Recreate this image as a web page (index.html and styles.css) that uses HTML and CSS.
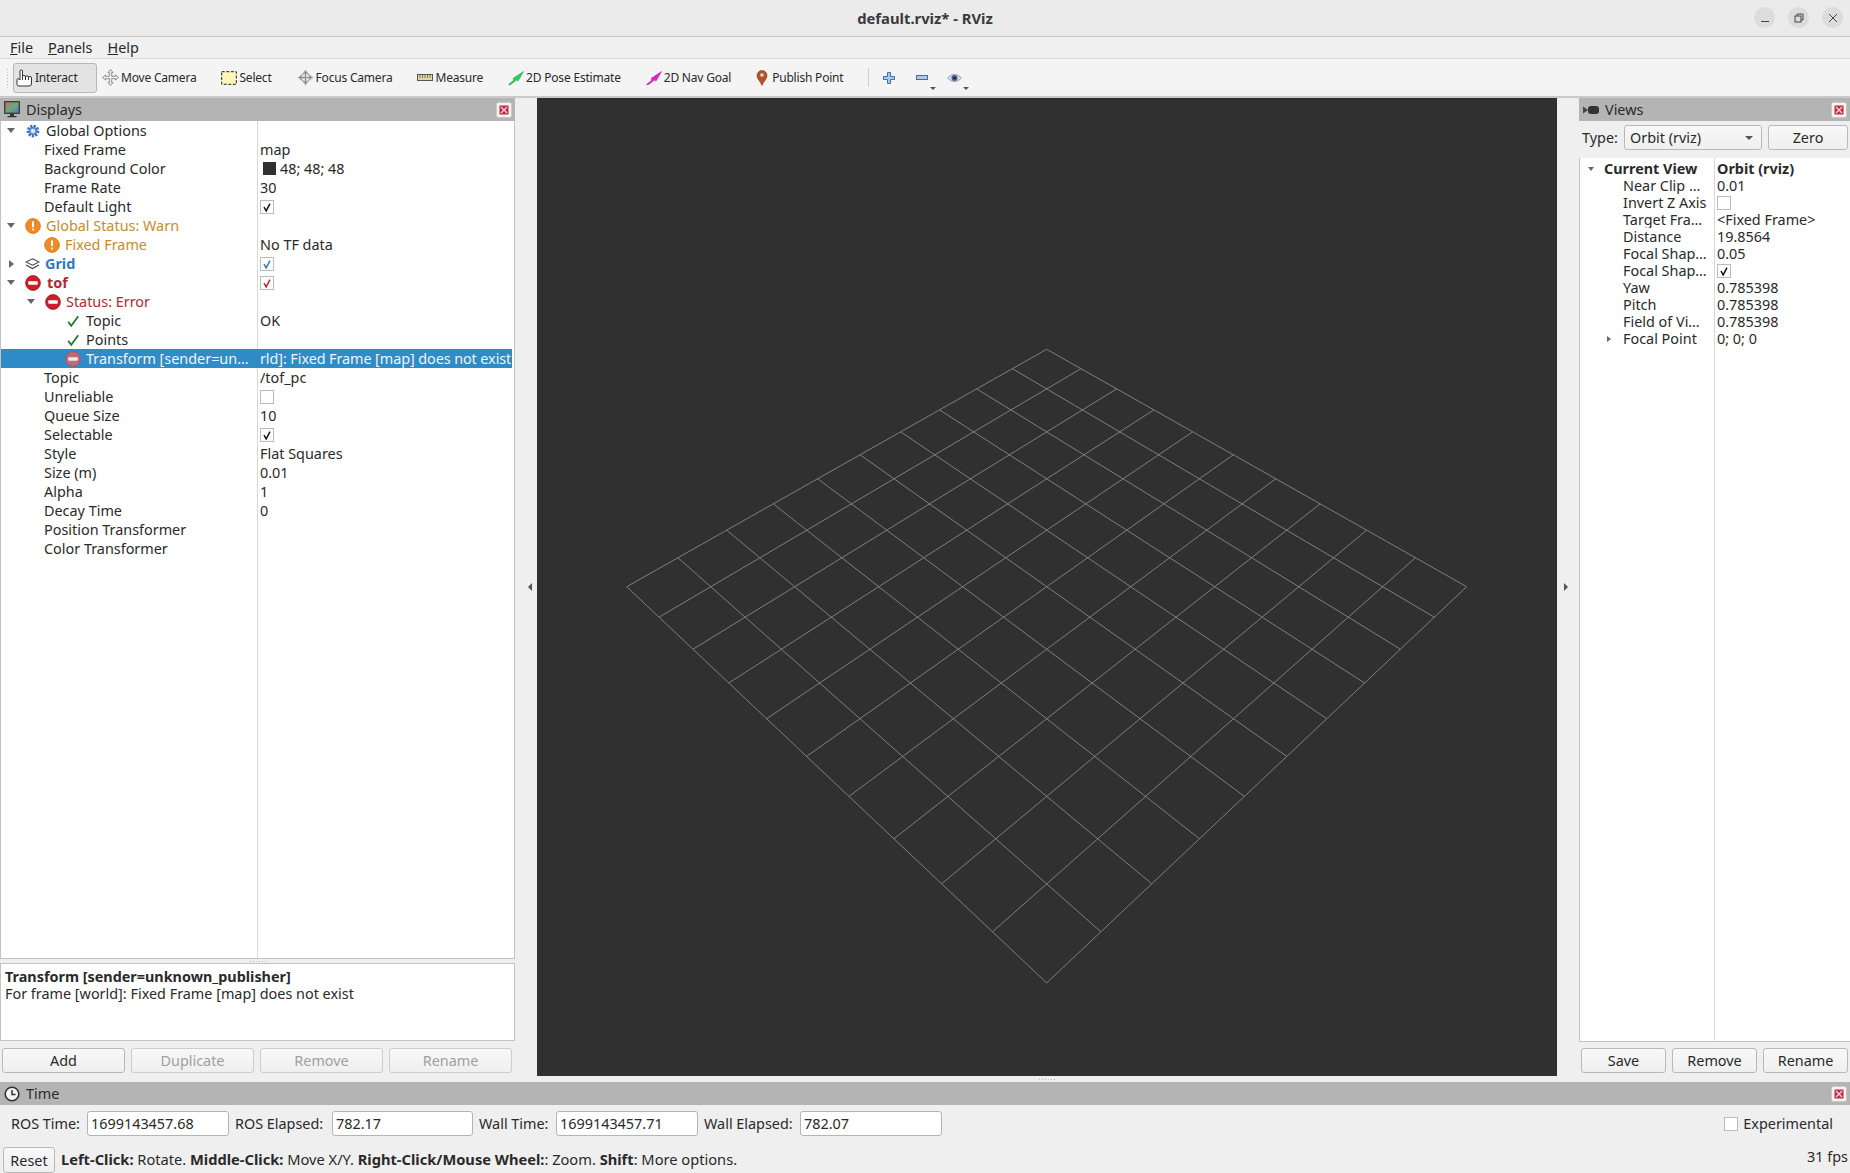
FILE: index.html
```html
<!DOCTYPE html>
<html lang="en">
<head>
<meta charset="UTF-8">
<title>default.rviz* - RViz</title>
<link rel="stylesheet" href="styles.css">
</head>
<body>

<!-- shared icons -->
<svg class="sprite" width="0" height="0">
  <symbol id="err" viewBox="0 0 16 16"><circle cx="8" cy="8" r="7.4" fill="#cc1f2b" stroke="#a5141f" stroke-width=".8"/><rect x="3.2" y="6.2" width="9.6" height="3.6" rx="1" fill="#fff"/></symbol>
  <symbol id="err-sel" viewBox="0 0 16 16"><circle cx="8" cy="8" r="7.4" fill="#c06a78" stroke="#a8505e" stroke-width=".8"/><rect x="3.2" y="6.2" width="9.6" height="3.6" rx="1" fill="#f3e6ea"/></symbol>
  <symbol id="warn" viewBox="0 0 16 16"><circle cx="8" cy="8" r="7.4" fill="#f08a24" stroke="#d9741a" stroke-width=".8"/><rect x="7" y="3.2" width="2" height="6" rx=".8" fill="#fff"/><rect x="7" y="10.6" width="2" height="2" rx=".8" fill="#fff"/></symbol>
  <symbol id="ok" viewBox="0 0 16 16"><path d="M2.5 9 L6 13.5 L14 2.5" fill="none" stroke="#1f7a2e" stroke-width="2"/></symbol>
  <symbol id="tick" viewBox="0 0 14 14"><path d="M3.5 7 L6 11.5 L10.5 3" fill="none" stroke="currentColor" stroke-width="1.7"/></symbol>
  <symbol id="close" viewBox="0 0 16 16"><rect x=".5" y=".5" width="15" height="15" rx="2" fill="#f4f4f4" stroke="#c8c8c8"/><rect x="3.5" y="3.5" width="9" height="9" fill="#c9283e"/><path d="M5 5 L11 11 M11 5 L5 11" stroke="#f6dfe2" stroke-width="1.3"/></symbol>
</svg>

<div class="titlebar">
  <span class="title-text">default.rviz* - RViz</span>
  <div class="win-btns">
    <span class="win-btn"><svg width="10" height="10" viewBox="0 0 10 10"><path d="M1 8.5 H9" stroke="#444" stroke-width="1"/></svg></span>
    <span class="win-btn"><svg width="10" height="10" viewBox="0 0 10 10"><rect x="1" y="3" width="6" height="6" fill="none" stroke="#444"/><path d="M3 3 V1 H9 V7 H7" fill="none" stroke="#444"/></svg></span>
    <span class="win-btn"><svg width="10" height="10" viewBox="0 0 10 10"><path d="M1 1 L9 9 M9 1 L1 9" stroke="#444" stroke-width="1"/></svg></span>
  </div>
</div>

<div class="menubar">
  <span><u>F</u>ile</span>
  <span><u>P</u>anels</span>
  <span><u>H</u>elp</span>
</div>

<div class="toolbar">
  <span class="grip"></span>
  <div class="tool tool-on">
    <svg width="17" height="18" viewBox="0 0 17 18"><path d="M1 10.5 V15.5 Q1 17 3 17 H13 Q15.5 17 15.5 15 V9 Q15.5 7.5 14 7.5 Q12.5 7.5 12.5 8.5 Q12.5 6.8 11 6.8 Q9.5 6.8 9.5 8 Q9.5 6.5 8 6.5 Q6.5 6.5 6.5 7.5 V2 Q6.5 1 5.3 1 Q4 1 4 2 V11 L3 10 Q1 9.3 1 10.5 Z M9.5 8 V11 M12.5 8.5 V11 M6.5 7.5 V11" fill="#fff" stroke="#333" stroke-width="1"/></svg>
    <span>Interact</span>
  </div>
  <div class="tool">
    <svg width="17" height="17" viewBox="0 0 17 17"><path d="M8.5 .5 L11 3.5 H9.7 V7.3 H13.5 V6 L16.5 8.5 L13.5 11 V9.7 H9.7 V13.5 H11 L8.5 16.5 L6 13.5 H7.3 V9.7 H3.5 V11 L.5 8.5 L3.5 6 V7.3 H7.3 V3.5 H6 Z" fill="#eee" stroke="#777" stroke-width=".8"/></svg>
    <span>Move Camera</span>
  </div>
  <div class="tool">
    <svg width="16" height="14" viewBox="0 0 16 14"><rect x=".7" y=".7" width="14.6" height="12.6" fill="#fdf6b8" stroke="#222" stroke-width="1" stroke-dasharray="3 1.6"/></svg>
    <span>Select</span>
  </div>
  <div class="tool">
    <svg width="17" height="17" viewBox="0 0 17 17"><path d="M8.5 .5 L11 4 H6 Z M8.5 16.5 L11 13 H6 Z M.5 8.5 L4 6 V11 Z M16.5 8.5 L13 6 V11 Z" fill="#aaa"/><circle cx="8.5" cy="8.5" r="4.6" fill="#ddd" stroke="#888"/><path d="M8.5 3 V14 M3 8.5 H14" stroke="#888"/></svg>
    <span>Focus Camera</span>
  </div>
  <div class="tool">
    <svg width="16" height="8" viewBox="0 0 16 8"><rect x=".5" y=".5" width="15" height="6" fill="#e3d9a0" stroke="#555"/><path d="M3 1 V4 M5.5 1 V4 M8 1 V4 M10.5 1 V4 M13 1 V4" stroke="#777"/></svg>
    <span>Measure</span>
  </div>
  <div class="tool">
    <svg width="16" height="14" viewBox="0 0 16 14"><path d="M.5 13.5 L6 9 L5 7.5 L15.5 .5 L10 10 L8.5 9 L2 14 Z" fill="#24d45a" stroke="#149040" stroke-width=".5"/></svg>
    <span>2D Pose Estimate</span>
  </div>
  <div class="tool">
    <svg width="16" height="14" viewBox="0 0 16 14"><path d="M.5 13.5 L6 9 L5 7.5 L15.5 .5 L10 10 L8.5 9 L2 14 Z" fill="#e622c8" stroke="#a61090" stroke-width=".5"/></svg>
    <span>2D Nav Goal</span>
  </div>
  <div class="tool tool-pin">
    <svg width="12" height="16" viewBox="0 0 12 16"><path d="M6 15.5 C4.5 11.5 1 9 1 5.5 A5 5 0 0 1 11 5.5 C11 9 7.5 11.5 6 15.5 Z" fill="#b5502a" stroke="#8a3a1c" stroke-width=".6"/><circle cx="6" cy="5" r="1.8" fill="#f2d9c8"/></svg>
    <span>Publish Point</span>
  </div>
  <span class="tool-sep"></span>
  <svg class="tool-ico ico-plus" width="12" height="12" viewBox="0 0 12 12"><path d="M4.5 .5 H7.5 V4.5 H11.5 V7.5 H7.5 V11.5 H4.5 V7.5 H.5 V4.5 H4.5 Z" fill="#a8c8ec" stroke="#3a70b0"/></svg>
  <svg class="tool-ico ico-minus" width="12" height="5" viewBox="0 0 12 5"><rect x=".5" y=".5" width="11" height="4" fill="#a8c8ec" stroke="#3a70b0"/></svg>
  <span class="drop-caret caret-minus"></span>
  <svg class="tool-ico ico-eye" width="15" height="10" viewBox="0 0 15 10"><path d="M.5 5 Q7.5 -2.5 14.5 5 Q7.5 12.5 .5 5 Z" fill="#d8dde8" stroke="#8a8f9a" stroke-width=".7"/><circle cx="7.5" cy="5" r="3" fill="#4a5d90"/><circle cx="7.5" cy="5" r="1.2" fill="#1c2230"/></svg>
  <span class="drop-caret caret-eye"></span>
</div>

<div class="main">
  <div class="dock dock-left">
    <div class="dock-title">
      <svg width="16" height="17" viewBox="0 0 16 17"><defs><linearGradient id="screen" x1="0" y1="0" x2="1" y2="1"><stop offset="0" stop-color="#c06a80"/><stop offset=".5" stop-color="#6ca878"/><stop offset="1" stop-color="#5a78c0"/></linearGradient></defs><rect x=".7" y=".7" width="14.6" height="11.6" fill="url(#screen)" stroke="#333" stroke-width="1.2"/><path d="M6 13 H10 V15 H12.5 V16.3 H3.5 V15 H6 Z" fill="#333"/></svg>
      <span>Displays</span>
      <svg class="dock-close" width="16" height="16"><use href="#close"/></svg>
    </div>

    <div class="tree tree-displays">
      <div class="row"><div class="name"><span class="caret down"></span><svg class="ico ico-gear" width="14" height="14" viewBox="0 0 14 14"><circle cx="7" cy="7" r="4.6" fill="#7fa6e0" stroke="#3f6fc0" stroke-width="3.6" stroke-dasharray="1.9 1.2"/><circle cx="7" cy="7" r="2" fill="#e4edfa"/></svg><span class="lbl">Global Options</span></div><div class="val"></div></div>
      <div class="row"><div class="name d1">Fixed Frame</div><div class="val">map</div></div>
      <div class="row"><div class="name d1">Background Color</div><div class="val"><span class="swatch"></span>48; 48; 48</div></div>
      <div class="row"><div class="name d1">Frame Rate</div><div class="val">30</div></div>
      <div class="row"><div class="name d1">Default Light</div><div class="val"><span class="check"><svg width="14" height="14"><use href="#tick"/></svg></span></div></div>
      <div class="row warn"><div class="name"><span class="caret down"></span><svg class="ico" width="16" height="16"><use href="#warn"/></svg><span class="lbl">Global Status: Warn</span></div><div class="val"></div></div>
      <div class="row warn"><div class="name d1i"><svg class="ico" width="16" height="16"><use href="#warn"/></svg><span class="lbl">Fixed Frame</span></div><div class="val val-plain">No TF data</div></div>
      <div class="row grid-row"><div class="name"><span class="caret right"></span><svg class="ico" width="15" height="12" viewBox="0 0 15 12"><path d="M7.5 .8 L14 4 L7.5 7.2 L1 4 Z M1 7 L7.5 10.6 L14 7" fill="none" stroke="#444" stroke-width="1.1"/></svg><span class="lbl">Grid</span></div><div class="val"><span class="check check-blue"><svg width="14" height="14"><use href="#tick"/></svg></span></div></div>
      <div class="row err"><div class="name"><span class="caret down"></span><svg class="ico" width="16" height="16"><use href="#err"/></svg><span class="lbl bold">tof</span></div><div class="val"><span class="check check-red"><svg width="14" height="14"><use href="#tick"/></svg></span></div></div>
      <div class="row err"><div class="name d1c"><span class="caret down"></span><svg class="ico" width="16" height="16"><use href="#err"/></svg><span class="lbl">Status: Error</span></div><div class="val"></div></div>
      <div class="row"><div class="name d2"><svg class="ico ico-ok" width="14" height="14"><use href="#ok"/></svg><span class="lbl">Topic</span></div><div class="val">OK</div></div>
      <div class="row"><div class="name d2"><svg class="ico ico-ok" width="14" height="14"><use href="#ok"/></svg><span class="lbl">Points</span></div><div class="val"></div></div>
      <div class="row row-sel"><div class="name d2"><svg class="ico" width="16" height="16"><use href="#err-sel"/></svg><span class="lbl">Transform [sender=un…</span></div><div class="val">rld]: Fixed Frame [map] does not exist</div></div>
      <div class="row"><div class="name d1">Topic</div><div class="val">/tof_pc</div></div>
      <div class="row"><div class="name d1">Unreliable</div><div class="val"><span class="check"></span></div></div>
      <div class="row"><div class="name d1">Queue Size</div><div class="val">10</div></div>
      <div class="row"><div class="name d1">Selectable</div><div class="val"><span class="check"><svg width="14" height="14"><use href="#tick"/></svg></span></div></div>
      <div class="row"><div class="name d1">Style</div><div class="val">Flat Squares</div></div>
      <div class="row"><div class="name d1">Size (m)</div><div class="val">0.01</div></div>
      <div class="row"><div class="name d1">Alpha</div><div class="val">1</div></div>
      <div class="row"><div class="name d1">Decay Time</div><div class="val">0</div></div>
      <div class="row"><div class="name d1">Position Transformer</div><div class="val"></div></div>
      <div class="row"><div class="name d1">Color Transformer</div><div class="val"></div></div>
    </div>

    <div class="splitter-h splitter-tree"><span class="dots"></span></div>

    <div class="desc">
      <b>Transform [sender=unknown_publisher]</b><br>
      For frame [world]: Fixed Frame [map] does not exist
    </div>

    <div class="btn-row btn-row-left">
      <button>Add</button>
      <button disabled>Duplicate</button>
      <button disabled>Remove</button>
      <button disabled>Rename</button>
    </div>
  </div>

  <div class="handle handle-left"><span class="arrow-left"></span></div>

  <div class="canvas-wrap">
    <svg class="canvas" viewBox="537 98 1020 978" width="1020" height="978">
      <g class="grid-lines">
        <path d="M626.7 586.7 L1046.7 982.9 M677.9 557.7 L1100.9 931.8 M726.7 530.2 L1151.8 883.8 M773.3 503.9 L1199.5 838.8 M817.7 478.8 L1244.4 796.4 M860.1 454.8 L1286.8 756.4 M900.7 431.9 L1326.8 718.7 M939.5 409.9 L1364.6 683 M976.7 388.9 L1400.4 649.2 M1012.4 368.7 L1434.4 617.2 M1046.7 349.3 L1466.7 586.7"/>
        <path d="M1466.7 586.7 L1046.7 982.9 M1415.5 557.7 L992.5 931.8 M1366.7 530.2 L941.6 883.8 M1320.1 503.9 L893.9 838.8 M1275.7 478.8 L849 796.4 M1233.3 454.8 L806.6 756.4 M1192.7 431.9 L766.6 718.7 M1153.9 409.9 L728.8 683 M1116.7 388.9 L693 649.2 M1081 368.7 L659 617.2 M1046.7 349.3 L626.7 586.7"/>
      </g>
    </svg>
    <div class="splitter-h splitter-canvas"><span class="dots"></span></div>
  </div>

  <div class="handle handle-right"><span class="arrow-right"></span></div>

  <div class="dock dock-right">
    <div class="dock-title">
      <svg width="16" height="10" viewBox="0 0 16 10"><path d="M0 1.5 L5 5 L0 8.5 Z" fill="#444"/><rect x="5" y="1" width="11" height="8" rx="3" fill="#333"/></svg>
      <span>Views</span>
      <svg class="dock-close" width="16" height="16"><use href="#close"/></svg>
    </div>
    <div class="view-type">
      <span>Type:</span>
      <div class="combo"><span>Orbit (rviz)</span><span class="drop-caret"></span></div>
      <button class="btn-zero">Zero</button>
    </div>
    <div class="tree tree-views">
      <div class="row row-head"><div class="name"><span class="caret down small"></span>Current View</div><div class="val">Orbit (rviz)</div></div>
      <div class="row"><div class="name">Near Clip …</div><div class="val">0.01</div></div>
      <div class="row"><div class="name">Invert Z Axis</div><div class="val"><span class="check"></span></div></div>
      <div class="row"><div class="name">Target Fra…</div><div class="val">&lt;Fixed Frame&gt;</div></div>
      <div class="row"><div class="name">Distance</div><div class="val">19.8564</div></div>
      <div class="row"><div class="name">Focal Shap…</div><div class="val">0.05</div></div>
      <div class="row"><div class="name">Focal Shap…</div><div class="val"><span class="check"><svg width="14" height="14"><use href="#tick"/></svg></span></div></div>
      <div class="row"><div class="name">Yaw</div><div class="val">0.785398</div></div>
      <div class="row"><div class="name">Pitch</div><div class="val">0.785398</div></div>
      <div class="row"><div class="name">Field of Vi…</div><div class="val">0.785398</div></div>
      <div class="row"><div class="name name-caret"><span class="caret right small"></span>Focal Point</div><div class="val">0; 0; 0</div></div>
    </div>
    <div class="btn-row btn-row-right">
      <button>Save</button>
      <button>Remove</button>
      <button>Rename</button>
    </div>
  </div>
</div>

<div class="dock-title time-title">
  <svg width="16" height="16" viewBox="0 0 16 16"><circle cx="8" cy="8" r="6.8" fill="#f4f4f4" stroke="#333" stroke-width="1.6"/><path d="M8 4 V8.5 H11.5" fill="none" stroke="#333" stroke-width="1.5"/></svg>
  <span>Time</span>
  <svg class="dock-close" width="16" height="16"><use href="#close"/></svg>
</div>

<div class="time-row">
  <label>ROS Time:</label><input type="text" value="1699143457.68">
  <label>ROS Elapsed:</label><input type="text" value="782.17">
  <label>Wall Time:</label><input type="text" value="1699143457.71">
  <label>Wall Elapsed:</label><input type="text" value="782.07">
  <span class="spacer"></span>
  <div class="experimental"><span class="check"></span>Experimental</div>
</div>

<div class="status-row">
  <button class="btn-reset">Reset</button>
  <div class="hint"><b>Left-Click:</b> Rotate. <b>Middle-Click:</b> Move X/Y. <b>Right-Click/Mouse Wheel:</b>: Zoom. <b>Shift</b>: More options.</div>
  <div class="fps">31 fps</div>
</div>

</body>
</html>
```

FILE: styles.css
```css
html, body {
  margin: 0;
  padding: 0;
}

body {
  width: 1850px;
  height: 1173px;
  overflow: hidden;
  background-color: #efefef;
  color: #2a2a2a;
  font-family: "Noto Sans", sans-serif;
  font-size: 14.4px;
  display: flex;
  flex-direction: column;
}

.sprite {
  display: block;
  height: 0;
}

/* window title */
.titlebar {
  height: 36px;
  flex: none;
  background-color: #ebebeb;
  border-bottom: 1px solid #c6c6c6;
  display: flex;
  align-items: center;
  justify-content: center;
  position: relative;
}

.title-text {
  font-weight: 700;
  font-size: 14.8px;
  color: #3a3a3a;
}

.win-btns {
  position: absolute;
  right: 7px;
  top: 7px;
  display: flex;
  gap: 13px;
}

.win-btn {
  width: 21px;
  height: 21px;
  border-radius: 50%;
  background-color: #dcdcdc;
  display: flex;
  align-items: center;
  justify-content: center;
}

/* menu */
.menubar {
  height: 21px;
  flex: none;
  display: flex;
  align-items: center;
  gap: 15px;
  padding-left: 10px;
  background-color: #f0f0f0;
  border-bottom: 1px solid #dcdcdc;
}

/* toolbar */
.toolbar {
  height: 39px;
  flex: none;
  box-sizing: border-box;
  display: flex;
  align-items: center;
  background-color: #f4f4f4;
  border-bottom: 2px solid #c9c9c9;
  font-size: 12px;
  letter-spacing: -0.2px;
}

.grip {
  width: 3px;
  height: 20px;
  margin: 0 4px 0 6px;
  background-image: radial-gradient(#bbb 1px, transparent 1px);
  background-size: 3px 3px;
}

.tool {
  display: flex;
  align-items: center;
  gap: 2px;
  margin-right: 25px;
}

.tool-on {
  width: 84px;
  height: 30px;
  box-sizing: border-box;
  margin-right: 5px;
  padding-left: 2px;
  background-color: #e3e3e3;
  border: 1px solid #b8b8b8;
  border-radius: 3px;
}

.tool-pin {
  gap: 4px;
}

.tool-sep {
  width: 1px;
  height: 19px;
  background-color: #d0d0d0;
  margin-right: 14px;
}

.ico-plus {
  margin-right: 21px;
}

.drop-caret {
  display: inline-block;
  width: 0;
  height: 0;
  border-left: 3px solid transparent;
  border-right: 3px solid transparent;
  border-top: 3px solid #555;
}

.caret-minus {
  align-self: flex-end;
  margin: 0 11px 6px 2px;
}

.caret-eye {
  align-self: flex-end;
  margin: 0 0 6px 1px;
}

/* main area */
.main {
  height: 984px;
  flex: none;
  display: flex;
}

.dock {
  display: flex;
  flex-direction: column;
}

.dock-left {
  width: 515px;
  flex: none;
}

.dock-right {
  width: 271px;
  flex: none;
}

.dock-title {
  height: 23px;
  flex: none;
  background-color: #b4b4b4;
  display: flex;
  align-items: center;
  gap: 6px;
  padding: 0 3px 0 4px;
}

.dock-close {
  margin-left: auto;
}

.tree {
  background-color: #fff;
  border: 1px solid #c4c4c4;
  border-top: none;
  box-sizing: border-box;
  position: relative;
}

.tree-displays {
  height: 838px;
  background-image: linear-gradient(#d8d8d8, #d8d8d8);
  background-size: 1px 100%;
  background-position: 256px 0;
  background-repeat: no-repeat;
}

.row {
  display: flex;
  height: 19px;
  line-height: 19px;
  white-space: nowrap;
}

.name {
  width: 256px;
  flex: none;
  display: flex;
  align-items: center;
  box-sizing: border-box;
  padding-left: 5px;
  overflow: hidden;
}

.name.d1 {
  padding-left: 43px;
}

.name.d1i {
  padding-left: 43px;
}

.name.d1c {
  padding-left: 25px;
}

.name.d2 {
  padding-left: 64px;
}

.val {
  padding-left: 3px;
  display: flex;
  align-items: center;
  overflow: hidden;
}

.ico {
  flex: none;
  margin-right: 5px;
}

.ico-gear {
  margin-left: 1px;
  margin-right: 6px;
}

.ico-ok {
  margin-left: 1px;
  margin-right: 6px;
}

.caret {
  flex: none;
  width: 0;
  height: 0;
  margin-right: 9px;
}

.caret.down {
  border-left: 4px solid transparent;
  border-right: 4px solid transparent;
  border-top: 5px solid #666;
  margin-left: 1px;
  margin-right: 10px;
}

.caret.right {
  border-top: 4px solid transparent;
  border-bottom: 4px solid transparent;
  border-left: 5px solid #666;
  margin-left: 3px;
  margin-right: 11px;
}

.warn .name {
  color: #c48d2e;
}

.err .name {
  color: #ad2a33;
}

.bold {
  font-weight: 700;
  margin-left: 1px;
}

.grid-row .lbl {
  font-weight: 700;
  color: #2f7abf;
}

.row-sel {
  background-color: #308cc6;
  color: #eef5fb;
  margin-right: 2px;
}

.row-sel .val {
  letter-spacing: -0.08px;
}

.swatch {
  display: inline-block;
  width: 13px;
  height: 13px;
  background-color: #303030;
  margin: 0 4px 0 3px;
}

.check {
  display: inline-flex;
  width: 14px;
  height: 14px;
  box-sizing: border-box;
  align-items: center;
  justify-content: center;
  background-color: #fff;
  border: 1px solid #bbb;
  color: #111;
}

.check-blue {
  color: #2f7abf;
}

.check-red {
  color: #b5222d;
}

.splitter-h {
  height: 5px;
  flex: none;
  display: flex;
  justify-content: center;
  align-items: center;
}

.splitter-tree {
  height: 4px;
}

.dots {
  width: 16px;
  height: 1px;
  background-image: repeating-linear-gradient(90deg, #bbb 0 1px, transparent 1px 3px);
}

.desc {
  height: 78px;
  flex: none;
  box-sizing: border-box;
  background-color: #fff;
  border: 1px solid #c4c4c4;
  padding: 4px;
  line-height: 17px;
}

.btn-row {
  display: flex;
  gap: 6px;
}

.btn-row-left {
  margin-top: 7px;
  padding: 0 2px;
}

.btn-row-left button {
  width: 123px;
}

.btn-row-right {
  margin-top: 6px;
  padding-left: 2px;
}

.btn-row-right button {
  width: 85px;
}

button {
  height: 25px;
  box-sizing: border-box;
  padding: 0;
  font-family: inherit;
  font-size: 14.4px;
  color: #2a2a2a;
  background: linear-gradient(#f8f8f8, #efefef);
  border: 1px solid #b9b9b9;
  border-radius: 3px;
}

button:disabled {
  color: #a0a0a0;
  border-color: #cdcdcd;
}

.handle {
  width: 22px;
  flex: none;
  box-sizing: border-box;
  display: flex;
  align-items: center;
  justify-content: center;
  padding-bottom: 6px;
}

.handle-left {
  padding-left: 7px;
}

.handle-right {
  padding-right: 4px;
}

.arrow-left {
  border-top: 4px solid transparent;
  border-bottom: 4px solid transparent;
  border-right: 4px solid #555;
}

.arrow-right {
  border-top: 4px solid transparent;
  border-bottom: 4px solid transparent;
  border-left: 4px solid #555;
}

.canvas-wrap {
  width: 1020px;
  flex: none;
}

.canvas {
  display: block;
  background-color: #303030;
}

.grid-lines path {
  fill: none;
  stroke: #7e7e7e;
  stroke-width: 1;
}

.splitter-canvas {
  height: 6px;
}

/* views panel */
.view-type {
  display: flex;
  align-items: center;
  height: 25px;
  margin-top: 4px;
  padding-left: 3px;
}

.combo {
  width: 138px;
  height: 25px;
  box-sizing: border-box;
  margin-left: auto;
  padding: 0 8px 0 5px;
  display: flex;
  align-items: center;
  justify-content: space-between;
  background: linear-gradient(#f8f8f8, #efefef);
  border: 1px solid #b9b9b9;
  border-radius: 3px;
}

.combo .drop-caret {
  border-left-width: 4px;
  border-right-width: 4px;
  border-top-width: 4px;
}

.btn-zero {
  width: 80px;
  margin-left: 6px;
  margin-right: 2px;
}

.tree-views {
  margin-top: 8px;
  height: 884px;
  border-right: none;
  background-image: linear-gradient(#d8d8d8, #d8d8d8);
  background-size: 1px 100%;
  background-position: 134px 0;
  background-repeat: no-repeat;
  padding-top: 2px;
}

.tree-views .row {
  height: 17px;
  line-height: 17px;
}

.tree-views .name {
  width: 135px;
  padding-left: 43px;
}

.tree-views .val {
  padding-left: 2px;
}

.tree-views .row-head {
  font-weight: 700;
}

.tree-views .row-head .name {
  padding-left: 7px;
}

.tree-views .name-caret {
  padding-left: 27px;
}

.caret.small.down {
  border-left-width: 3px;
  border-right-width: 3px;
  border-top-width: 4px;
  margin-right: 10px;
}

.caret.small.right {
  border-top-width: 3px;
  border-bottom-width: 3px;
  border-left-width: 4px;
  margin-left: 0;
  margin-right: 12px;
}

/* time panel */
.time-title {
  width: 100%;
  box-sizing: border-box;
}

.time-row {
  height: 37px;
  flex: none;
  display: grid;
  grid-template-columns: 70px 142px 91px 141px 71px 142px 90px 142px 1fr auto;
  column-gap: 6px;
  align-items: center;
  padding: 0 17px 0 11px;
}

.time-row label {
  white-space: nowrap;
}

.time-row input {
  height: 25px;
  box-sizing: border-box;
  padding: 0 3px;
  width: 100%;
  font-family: inherit;
  font-size: 14.4px;
  color: #2a2a2a;
  background-color: #fff;
  border: 1px solid #b4b4b4;
  border-radius: 3px;
}

.experimental {
  display: flex;
  align-items: center;
  gap: 5px;
}

.status-row {
  flex: none;
  height: 32px;
  box-sizing: border-box;
  display: flex;
  align-items: flex-end;
  padding: 0 2px 1px 3px;
}

.btn-reset {
  width: 52px;
  height: 26px;
}

.hint {
  margin-left: 6px;
  line-height: 20px;
  padding-bottom: 4px;
  font-size: 14.65px;
}

.fps {
  margin-left: auto;
  line-height: 20px;
  padding-bottom: 6px;
}
```
